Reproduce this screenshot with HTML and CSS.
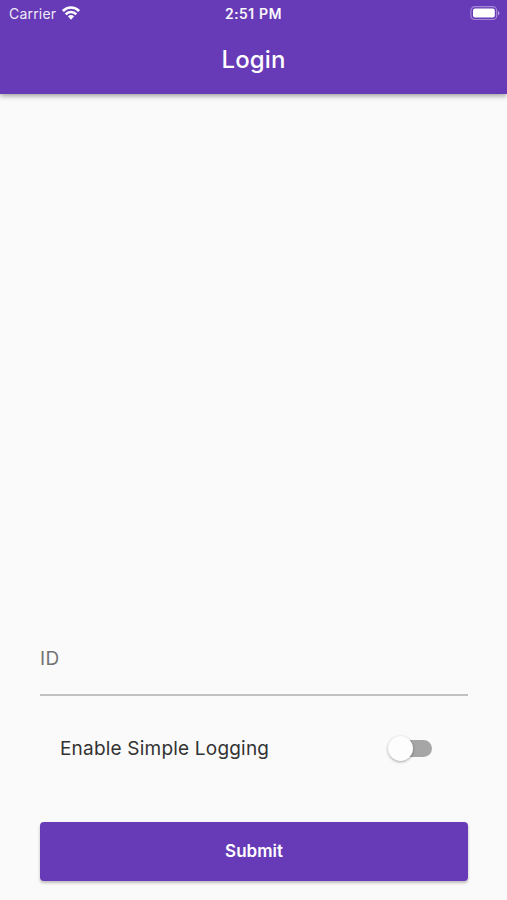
FILE: index.html
```html
<!DOCTYPE html>
<html lang="en">
<head>
<meta charset="utf-8">
<title>Login</title>
<link rel="stylesheet" href="styles.css">
</head>
<body>
<header class="app-bar">
  <div class="status">
    <div class="network">
      <span class="carrier">Carrier</span>
      <svg class="wifi" width="18" height="14" viewBox="0 0 18 14" fill="none" stroke="#fff" stroke-width="2.6">
        <path d="M.9 5C5.300.4 12.700.4 17.100 5"/>
        <path d="M3.700 8.300C6.500 5.200 11.500 5.200 14.300 8.300"/>
        <path d="M5.900 10.300Q9 7.700 12.100 10.300L9 13.700Z" fill="#fff" stroke="none"/>
      </svg>
    </div>
    <span class="time">2:51 PM</span>
    <svg class="battery" width="30" height="14" viewBox="0 0 30 14">
      <rect x=".9" y=".7" width="25.800" height="12.800" rx="3.800" fill="none" stroke="#fff" stroke-opacity=".4" stroke-width="1.200"/>
      <rect x="3" y="2.600" width="21.800" height="9" rx="2" fill="#fff"/>
      <path d="M28 4.800q3.200 2.300 0 4.600z" fill="#fff" fill-opacity=".5"/>
    </svg>
  </div>
  <h1 class="title">Login</h1>
</header>
<main class="form">
  <div class="field"><span class="field-label">ID</span></div>
  <div class="option">
    <span class="option-label">Enable Simple Logging</span>
    <div class="switch"><div class="thumb"></div></div>
  </div>
  <button class="submit"><span class="submit-label">Submit</span></button>
</main>
</body>
</html>
```

FILE: styles.css
```css
* { box-sizing: border-box; }
body {
  margin: 0;
  height: 900px;
  display: flex;
  flex-direction: column;
  overflow: hidden;
  background: #fafafa;
  font-family: Inter, "Liberation Sans", sans-serif;
}
.app-bar {
  height: 94px;
  flex: none;
  background: #673ab7;
  color: #fff;
  box-shadow: 0 2px 5px rgba(0, 0, 0, .36);
}
.status {
  height: 27px;
  padding: 0 7px 0 9px;
  display: grid;
  grid-template-columns: 1fr auto 1fr;
  align-items: center;
  font-size: 14px;
  line-height: 27px;
}
.network { display: flex; align-items: center; gap: 6px; }
.carrier { font-size: 14px; letter-spacing: .2px; opacity: .9; }
.wifi { display: block; margin-bottom: 2px; }
.time {
  margin-left: -2px;
  font-size: 14px;
  font-weight: 500;
  letter-spacing: .6px;
  -webkit-text-stroke: .2px #fff;
}
.battery { justify-self: end; margin-bottom: 2px; }
.title {
  margin: 0;
  height: 67px;
  text-align: center;
  font-size: 24px;
  font-weight: 500;
  letter-spacing: .15px;
  line-height: 66px;
}
.form {
  flex: 1;
  display: flex;
  flex-direction: column;
  justify-content: flex-end;
  padding: 0 39px 19px 40px;
}
.field {
  height: 58px;
  padding-top: 8px;
  border-bottom: 2px solid #c1c1c1;
  color: #737373;
  font-size: 19px;
  letter-spacing: .3px;
  line-height: 26px;
}
.option {
  height: 52px;
  margin: 26px 36px 48px 20px;
  display: flex;
  align-items: center;
  justify-content: space-between;
  color: #333;
  font-size: 19px;
  letter-spacing: .2px;
}
.switch {
  width: 40px;
  height: 17px;
  border-radius: 9px;
  background: #a6a6a6;
  display: flex;
  align-items: center;
}
.thumb {
  flex: none;
  width: 25px;
  height: 25px;
  margin-left: -4px;
  border-radius: 50%;
  background: #fdfdfd;
  box-shadow: 0 1px 3px rgba(0, 0, 0, .35);
}
.submit {
  height: 59px;
  padding: 0 0 2px;
  border: 0;
  border-radius: 4px;
  background: #673ab7;
  color: #fff;
  font: 600 17px Inter, "Liberation Sans", sans-serif;
  box-shadow: 0 2px 3px rgba(0, 0, 0, .25);
}
```
